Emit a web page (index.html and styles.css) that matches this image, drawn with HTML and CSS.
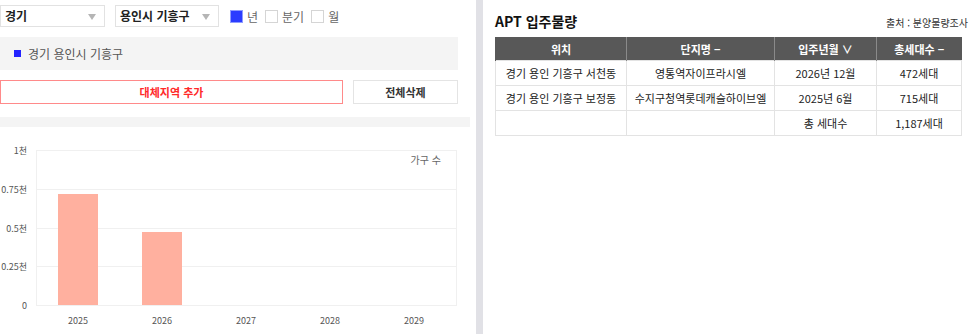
FILE: index.html
```html
<!DOCTYPE html>
<html lang="ko">
<head>
    <meta charset="UTF-8">
    <title>APT 입주물량</title>
    <link rel="stylesheet" href="styles.css">
</head>
<body>
<div class="page">
    <!-- Left: region filter + chart -->
    <div class="left">
        <div class="filters">
            <div class="select sel-1"><span>경기</span><i class="arrow"></i></div>
            <div class="select sel-2"><span>용인시 기흥구</span><i class="arrow"></i></div>
            <label class="check"><span class="box on"></span>년</label>
            <label class="check"><span class="box"></span>분기</label>
            <label class="check"><span class="box"></span>월</label>
        </div>

        <div class="region-box">
            <span class="dot"></span>경기 용인시 기흥구
        </div>

        <div class="buttons">
            <button class="btn add">대체지역 추가</button>
            <button class="btn clear">전체삭제</button>
        </div>

        <div class="sep"></div>

        <svg class="chart" width="470" height="207" viewBox="0 127 470 207">
            <g class="grid">
                <line x1="36" y1="150.5" x2="457" y2="150.5"/>
                <line x1="36" y1="189.5" x2="457" y2="189.5"/>
                <line x1="36" y1="228.5" x2="457" y2="228.5"/>
                <line x1="36" y1="266.5" x2="457" y2="266.5"/>
                <line x1="36" y1="305.5" x2="457" y2="305.5"/>
                <line x1="36.5" y1="150" x2="36.5" y2="305"/>
                <line x1="456.5" y1="150" x2="456.5" y2="305"/>
            </g>
            <g class="ylabels">
                <text x="27" y="154">1천</text>
                <text x="27" y="193">0.75천</text>
                <text x="27" y="232">0.5천</text>
                <text x="27" y="270">0.25천</text>
                <text x="27" y="309">0</text>
            </g>
            <rect class="bar" x="58" y="194" width="40" height="111"/>
            <rect class="bar" x="142" y="232" width="40" height="73"/>
            <g class="xlabels">
                <text x="78" y="324">2025</text>
                <text x="162" y="324">2026</text>
                <text x="246" y="324">2027</text>
                <text x="330" y="324">2028</text>
                <text x="414" y="324">2029</text>
            </g>
            <text class="legend" x="441" y="164">가구 수</text>
        </svg>
    </div>

    <div class="divider"></div>

    <!-- Right: move-in table -->
    <div class="right">
        <div class="title-row">
            <h2>APT 입주물량</h2>
            <span class="source">출처 : 분양물량조사</span>
        </div>
        <table>
            <colgroup>
                <col class="c1">
                <col class="c2">
                <col class="c3">
                <col class="c4">
            </colgroup>
            <thead>
            <tr>
                <th>위치</th>
                <th>단지명 −</th>
                <th>입주년월 ∨</th>
                <th>총세대수 −</th>
            </tr>
            </thead>
            <tbody>
            <tr>
                <td>경기 용인 기흥구 서천동</td>
                <td>영통역자이프라시엘</td>
                <td>2026년 12월</td>
                <td>472세대</td>
            </tr>
            <tr>
                <td>경기 용인 기흥구 보정동</td>
                <td>수지구청역롯데캐슬하이브엘</td>
                <td>2025년 6월</td>
                <td>715세대</td>
            </tr>
            <tr>
                <td></td>
                <td></td>
                <td>총 세대수</td>
                <td>1,187세대</td>
            </tr>
            </tbody>
        </table>
    </div>
</div>
</body>
</html>
```

FILE: styles.css
```css
body {
    margin: 0;
    font-family: "Noto Sans CJK KR", "Noto Sans", sans-serif;
    color: #333;
    background: #fff;
}

.page {
    display: flex;
    width: 972px;
    height: 334px;
    overflow: hidden;
}

.left {
    width: 476px;
    flex: none;
}

.divider {
    width: 7px;
    flex: none;
    background: #e1e1e6;
}

.right {
    flex: 1;
    padding: 0 4px 0 12px;
}

/* filters */
.filters {
    display: flex;
    align-items: center;
    height: 22px;
    margin-top: 5px;
}

.select {
    position: relative;
    box-sizing: border-box;
    height: 22px;
    border: 1px solid #e2e2e2;
    font-size: 12px;
    font-weight: bold;
    line-height: 20px;
    padding-left: 4px;
    color: #222;
}

.sel-1 {
    width: 105px;
}

.sel-2 {
    width: 104px;
    margin-left: 10px;
}

.arrow {
    position: absolute;
    right: 8px;
    top: 8px;
    width: 0;
    height: 0;
    border-left: 4px solid transparent;
    border-right: 4px solid transparent;
    border-top: 6px solid #b5b5b5;
}

.check {
    display: flex;
    align-items: center;
    font-size: 12px;
    color: #666;
    margin-right: 7px;
}

.filters .check:first-of-type {
    margin-left: 11px;
}

.box {
    box-sizing: border-box;
    width: 13px;
    height: 13px;
    border: 1px solid #d5d5d5;
    margin-right: 4px;
    background: #fff;
}

.box.on {
    background: #2b3cff;
    border: 1px solid #8f9cff;
}

/* selected region */
.region-box {
    display: flex;
    align-items: center;
    width: 458px;
    height: 33px;
    margin-top: 10px;
    background: #f4f4f4;
    font-size: 12px;
    color: #555;
}

.dot {
    width: 7px;
    height: 7px;
    background: #2323ff;
    margin: 0 7px 0 14px;
}

.buttons {
    display: flex;
    width: 458px;
    margin-top: 10px;
    gap: 10px;
}

.btn {
    height: 24px;
    background: #fff;
    font-family: inherit;
    font-size: 11px;
    font-weight: bold;
    padding: 0;
}

.btn.add {
    width: 343px;
    border: 1px solid #ff8a8a;
    color: #ff2a2a;
}

.btn.clear {
    width: 105px;
    border: 1px solid #e4e4e4;
    color: #333;
}

.sep {
    width: 470px;
    height: 10px;
    margin-top: 13px;
    background: #f4f4f4;
}

/* chart */
.chart {
    display: block;
    font-family: "Noto Sans CJK KR", sans-serif;
}

.grid line {
    stroke: #f0f0f0;
    stroke-width: 1;
}

.ylabels text {
    font-size: 9px;
    fill: #555;
    text-anchor: end;
}

.xlabels text {
    font-size: 9px;
    fill: #555;
    text-anchor: middle;
}

.legend {
    font-size: 10px;
    fill: #666;
    text-anchor: end;
}

.bar {
    fill: #ffb09f;
}

/* table */
.title-row {
    display: flex;
    justify-content: space-between;
    align-items: baseline;
    height: 37px;
}

.title-row h2 {
    margin: 11px 0 0 0;
    font-size: 14px;
    font-weight: bold;
    color: #111;
}

.source {
    font-size: 10px;
    color: #333;
}

table {
    width: 466px;
    border-collapse: collapse;
    font-size: 11px;
    table-layout: fixed;
}

.c1 { width: 131px; }
.c2 { width: 148px; }
.c3 { width: 102px; }
.c4 { width: 85px; }

th {
    height: 23px;
    background: #585858;
    color: #fff;
    font-weight: bold;
    border-left: 1px solid #8a8a8a;
    padding: 0;
}

th:first-child {
    border-left: 1px solid #585858;
}

td {
    height: 24px;
    border: 1px solid #e3e3e3;
    text-align: center;
    color: #222;
    padding: 0;
}
```
